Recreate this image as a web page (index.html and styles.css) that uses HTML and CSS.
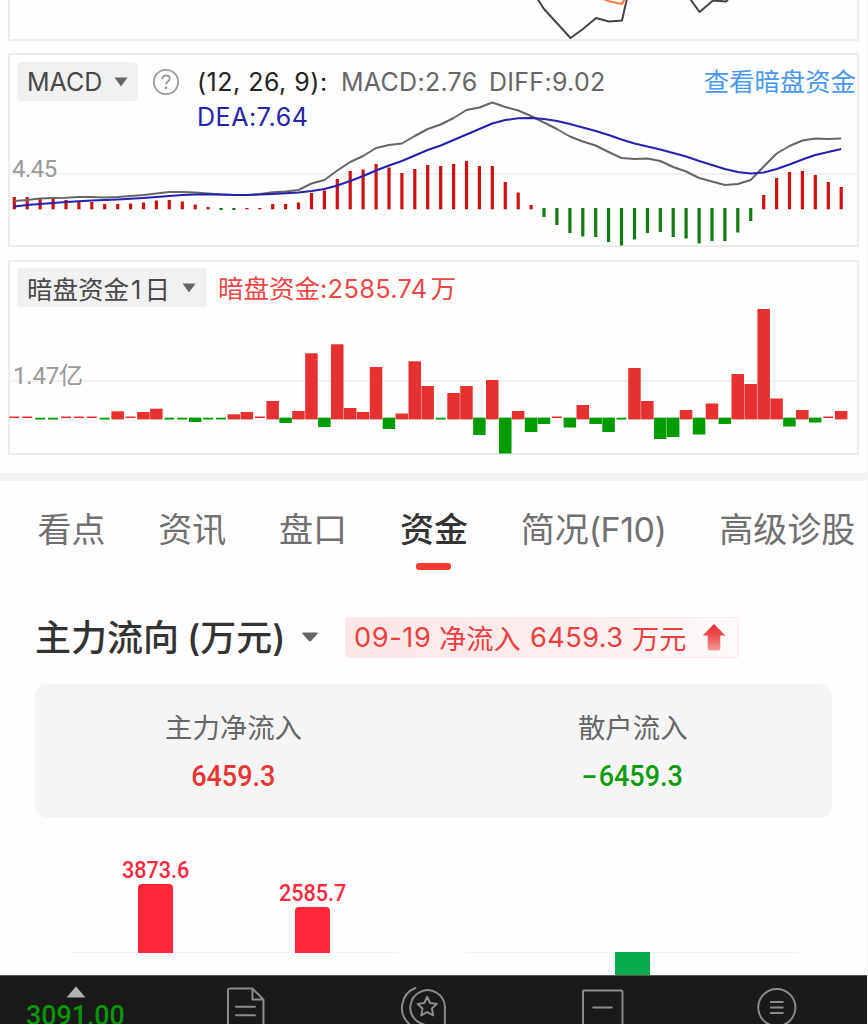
FILE: index.html
```html
<!DOCTYPE html>
<html lang="zh-CN">
<head>
<meta charset="utf-8">
<title>资金</title>
<link rel="stylesheet" href="styles.css">
</head>
<body>
<div class="page">
  <section class="panel panel-price">
    <svg class="plot" viewBox="8 0 851 41">
      <polyline class="line-orange" points="598,-3 610,1.5 622,4 625,-2"/>
      <polyline class="line-dark" points="535,-5 544,9 570.5,38 583,29 596,18 609,21.5 622,20.5 628,-6"/>
      <polyline class="line-dark" points="688,-4 699.5,12 713,0.5 726,1.5 728,0"/>
    </svg>
  </section>

  <section class="panel panel-macd">
    <svg class="plot" viewBox="8 53 851 194">
      <line class="grid-line" x1="9" x2="858" y1="174" y2="174"/>
      <g id="macd-bars"></g>
      <polyline id="diff-line" class="line-diff"/>
      <polyline id="dea-line" class="line-dea"/>
    </svg>
    <header class="head">
      <div class="chip chip-macd"><span class="t-macd">MACD</span><svg class="caret" viewBox="0 0 14 10"><path d="M.5 .5H13.5L7 9.5Z"/></svg></div>
      <svg class="help" viewBox="0 0 28 28"><circle cx="14" cy="14" r="12.2"/><path d="M10.3 11.2C10.4 8.7 11.8 7.5 14 7.5C16.2 7.5 17.7 8.8 17.7 10.7C17.7 13.3 14.1 13.4 14.1 16.5"/><circle class="dot" cx="14.1" cy="19.9" r="1.3"/></svg>
      <div class="readout">
        <div class="row"><span class="t-param">(12, 26, 9):</span><span class="t-val">MACD:2.76</span><span class="t-diff">DIFF:9.02</span></div>
        <div class="row"><span class="t-dea">DEA:7.64</span></div>
      </div>
      <a class="link">查看暗盘资金</a>
    </header>
    <span class="axis axis-macd">4.45</span>
  </section>

  <section class="panel panel-fund">
    <svg class="plot" viewBox="8 260 851 195">
      <line class="grid-line" x1="9" x2="858" y1="381" y2="381"/>
      <g id="fund-bars"></g>
    </svg>
    <header class="head">
      <div class="chip chip-fund"><span class="t-fund">暗盘资金<span class="one">1</span>日</span><svg class="caret" viewBox="0 0 14 10"><path d="M.5 .5H13.5L7 9.5Z"/></svg></div>
      <span class="t-red">暗盘资金<span class="num">:2585.74</span>万</span>
    </header>
    <span class="axis axis-fund">1.47<span class="yi">亿</span></span>
  </section>

  <div class="divider"></div>

  <nav class="tabs">
    <span class="tab">看点</span><span class="tab">资讯</span><span class="tab">盘口</span><span class="tab active">资金</span><span class="tab tab-f10">简况<span class="f10">(F10)</span></span><span class="tab">高级诊股</span>
  </nav>

  <div class="title-row">
    <h2 class="title">主力流向<span class="unit">(万元)</span></h2>
    <svg class="caret caret-lg" viewBox="0 0 18 12"><path d="M1.5 1.5H16.5Q17 2.3 16.3 3L10.3 9.8Q9 11 7.7 9.8L1.7 3Q1 2.3 1.5 1.5Z"/></svg>
    <div class="badge"><span class="b-date">09-19</span><span class="b-cn">净流入</span><span class="b-num">6459.3</span><span class="b-unit">万元</span>
      <svg class="arrow" viewBox="0 0 24 28"><defs><linearGradient id="ag" x1="0" y1="0" x2="0" y2="1"><stop offset="0" stop-color="#e52b2b"/><stop offset=".5" stop-color="#ee5558"/><stop offset="1" stop-color="#f59a9c"/></linearGradient></defs><path fill="url(#ag)" d="M12 1L23.3 12.5H18.3V25.5Q18.3 27.5 16.3 27.5H7.7Q5.7 27.5 5.7 25.5V12.5H.7Z"/></svg>
    </div>
  </div>

  <div class="summary">
    <div class="cell"><span class="label">主力净流入</span><span class="value up">6459.3</span></div>
    <div class="cell"><span class="label">散户流入</span><span class="value down"><span class="minus">-</span>6459.3</span></div>
  </div>

  <div class="flow">
    <div class="flow-half">
      <div class="col"><span class="col-label">3873.6</span><i class="bar bar-tall"></i></div>
      <div class="col"><span class="col-label">2585.7</span><i class="bar bar-short"></i></div>
    </div>
    <div class="flow-half flow-out"><i class="bar-green"></i></div>
  </div>

  <footer class="dock">
    <div class="quote"><svg class="tri" viewBox="0 0 20 12"><path d="M10 .5L19.5 11.5H.5Z"/></svg><span class="idx">3091.00</span></div>
    <svg class="dock-icons" viewBox="200 975 668 49">
      <g class="ico">
        <path d="M228 1030V990.5Q228 988.5 230 988.5H252.5L263.5 999.5V1030M252.5 988.5V999.5H263.5M236 1006.7H255M236 1015.2H255"/>
        <path d="M415.5 988A21.5 21.5 0 0 0 409.5 1024M445.2 1030V1007A17.3 17.3 0 1 0 416.5 1020.5Q420 1023.5 424 1024.2"/>
        <path d="M427.5 996.8L430.4 1003L437.2 1003.9L432.2 1008.6L433.5 1015.4L427.5 1012.1L421.5 1015.4L422.8 1008.6L417.8 1003.9L424.6 1003Z"/>
        <path d="M583.5 1030V992Q583.5 990.5 585 990.5H621.5Q623 990.5 623 992V1030M593.7 1007.5H612.3"/>
        <circle cx="777.5" cy="1007.5" r="18.6"/>
        <path d="M771.5 1002H783.5M771.5 1007.5H783.5M771.5 1013H783.5"/>
      </g>
    </svg>
  </footer>
</div>
<script src="charts.js"></script>
</body>
</html>
```
FILE: styles.css
```css
* { box-sizing: border-box; }
body { margin: 0; background: #fefefe; }
.page {
  width: 868px; height: 1024px; overflow: hidden;
  display: flex; flex-direction: column;
  font-family: Inter, "Noto Sans CJK SC", sans-serif;
  color: #333; white-space: nowrap;
  border-right: 1px solid #f6f6f6;
}
.page > * { flex: none; }

.panel { margin: 0 8px; width: 851px; display: grid; grid-template: 100% / 100%; box-shadow: inset 0 0 0 2px #ededed; }
.panel > * { grid-area: 1 / 1; }
.panel-price { height: 41px; box-shadow: inset 2px 0 #ededed, inset -2px 0 #ededed, inset 0 -2px #ededed; }
.panel-macd { height: 194px; margin-top: 12px; }
.panel-fund { height: 195px; margin-top: 13px; }
.plot { width: 851px; height: 100%; display: block; }
.plot polyline { fill: none; stroke-width: 2; stroke-linejoin: round; }
.line-dark { stroke: #444; }
.line-orange { stroke: #ff7a45; }
.line-diff { stroke: #666; }
.line-dea { stroke: #2222b0; }
.grid-line { stroke: #eee; stroke-width: 1.3; }
.macd-up { fill: #cf1010; }
.macd-down { fill: #147a14; }
.fund-up { fill: #e73030; }
.fund-down { fill: #009b00; }

.head { display: flex; align-items: flex-start; padding: 8px 3px 0 9px; }
.chip { height: 39px; border-radius: 4px; background: #f1f1f1; display: flex; align-items: center; justify-content: space-between; padding: 0 10px; color: #484848; }
.chip-macd { width: 121px; margin-top: 1px; }
.chip-fund { width: 190px; padding-right: 11px; }
.caret { width: 14px; height: 10px; fill: #666; }
.t-macd { font-size: 25px; letter-spacing: 0; }
.help { width: 28px; height: 28px; margin: 7px 0 0 14px; fill: none; stroke: #999; stroke-width: 1.8; }
.help .dot { fill: #999; stroke: none; }
.readout { margin-left: 17px; width: 507px; font-size: 25px; line-height: 35px; padding-top: 4px; letter-spacing: .3px; }
.row { display: flex; }
.t-param { width: 144px; color: #222; letter-spacing: .5px; }
.t-val { width: 148px; color: #666; }
.t-diff { color: #666; }
.t-dea { color: #2323a8; letter-spacing: .6px; }
.link { color: #4a97ee; font-size: 25.4px; line-height: 37px; padding-top: 2px; }
.axis { color: #999; align-self: start; justify-self: start; }
.axis-macd { font: 24px/30px Roboto, sans-serif; margin: 101px 0 0 4px; letter-spacing: -.5px; }
.axis-fund { font: 24px/30px Roboto, "Noto Sans CJK SC", sans-serif; margin: 101px 0 0 5px; letter-spacing: -.2px; }
.t-fund { font-size: 25.5px; }
.one { padding: 0 3px 0 2px; }
.t-red { color: #ef4747; font-size: 25.5px; line-height: 38px; margin-left: 11px; padding-top: 2px; }
.num { letter-spacing: .25px; margin-right: 3px; }

.divider { height: 8px; margin-top: 18px; background: #f4f4f4; }

.tabs { height: 98px; padding-left: 37.5px; display: flex; font-size: 34px; line-height: 98px; color: #707070; }
.tab { margin-right: 52.8px; }
.tab:last-child { margin-right: 0; }
.active { font-weight: 500; color: #333; display: flex; flex-direction: column; align-items: center; }
.active::after { content: ""; width: 35px; height: 7px; margin-top: -16px; border-radius: 3px; background: #fb3a30; }
.f10 { letter-spacing: -.5px; }

.title-row { display: flex; align-items: center; height: 42px; margin: 37px 0 0 35px; }
.title { margin: 0; font-size: 36px; font-weight: 500; line-height: 42px; width: 266px; padding-top: 2px; }
.unit { margin-left: 8px; }
.caret-lg { width: 18px; height: 12px; }
.badge { width: 394px; height: 41px; margin-left: 26px; padding-left: 8px; display: flex; align-items: center; border: 1px solid #fdeaea; border-radius: 4px; background: linear-gradient(90deg, #fce7e7, #fdeeee 60%, #fefafa); color: #ee3f3f; font-size: 27.2px; }
.b-date { width: 85px; letter-spacing: .6px; }
.b-cn { width: 91px; }
.b-num { width: 102px; letter-spacing: .4px; }
.b-unit { width: 70px; }
.arrow { width: 24px; height: 28px; }

.summary { width: 797px; height: 134px; margin: 26px 0 0 35px; border-radius: 12px; background: #f5f5f5; display: grid; grid-template-columns: 1fr 1fr; }
.cell { display: flex; flex-direction: column; align-items: center; padding-top: 24px; }
.cell:first-child { padding-right: 1.5px; }
.label { font-size: 27.4px; line-height: 40px; color: #666; }
.value { font: 500 30.3px/40px Roboto, sans-serif; margin-top: 8px; transform: scaleX(.89); }
.minus { display: inline-block; transform: scaleX(1.7); margin-right: 5px; }
.up { color: #e93434; }
.down { color: #0c9c0c; margin-left: 2px; }

.flow { height: 157px; display: flex; gap: 68px; padding-left: 69px; }
.flow-half { width: 330px; height: 134.5px; border-bottom: 1.5px solid #f3f3f3; display: flex; align-items: flex-end; justify-content: center; gap: 87px; }
.col { width: 70px; display: flex; flex-direction: column; align-items: center; margin-bottom: -1px; }
.col-label { font: 500 23.5px/28px Roboto, sans-serif; color: #fb2a40; transform: scaleX(.92); }
.bar { width: 35px; background: #ff2638; border-radius: 4px 4px 0 0; }
.bar-tall { height: 69px; }
.bar-short { height: 46px; }
.flow-out { align-items: flex-start; }
.bar-green { flex: none; width: 35px; height: 23px; margin-top: 134px; background: #09ab4d; }

.dock { height: 49px; background: #1a1a1a; border-top: 1px solid #555; display: flex; overflow: hidden; }
.quote { width: 200px; padding: 10px 0 0 26px; display: flex; flex-direction: column; }
.tri { flex: none; width: 20px; height: 12px; margin-left: 40px; fill: #b2b2b2; }
.idx { font: 500 28.5px/34px Roboto, sans-serif; color: #079607; margin-top: 1px; transform: scaleX(.94); transform-origin: 0 0; }
.dock-icons { width: 668px; height: 49px; margin-top: -1px; }
.ico { fill: none; stroke: #8c8c8c; stroke-width: 2; stroke-linejoin: round; stroke-linecap: round; }
```
FILE: charts.js
```js
const STEP = 12.92;

function rect(cls, x, y, w, h) {
  return `<rect class="${cls}" x="${x.toFixed(1)}" y="${y}" width="${w}" height="${h.toFixed(1)}"/>`;
}

// Bar ends on the vertical axis; values above the zero line are gains.
const macd = [197,197,198,199,200,201,202,204,204,203.5,202.5,200.5,200,201.5,204.5,207,210,210,208,208,204,204,202.5,193,190.5,179,171,169.5,164,167.5,173,169,165,166,164,161,166,166,182,192.5,205,217,225,233,236.5,237,242,245.5,239.5,233,232,237,238.5,243.5,241,241,232.5,221,195,178,172,171,175,182,187];
document.getElementById('macd-bars').innerHTML = macd.map((v, i) => {
  const x = 14.3 + STEP * i - 1.6;
  return v < 209 ? rect('macd-up', x, v, 3.2, 209.3 - v) : rect('macd-down', x, 208, 3.2, v - 208);
}).join('');

const diff = [201,200,198.5,198,197.7,197,197,197.5,197,196,195,193.5,192,192,192.5,193.5,194.5,195,195,194,192.3,191.5,190,183.5,180,170.5,162,156,148,145,143.5,136,129,124.5,118,110,107.5,102.5,107,110.5,116,122.5,129,136.5,141.5,145.5,152,158,159,158.5,161,167,171.5,178,181.5,185,184,180,166.5,153.5,146,140.5,138.5,139,138.5];
const dea = [206.5,205,204,203,202,201.2,200.5,200,199.5,198.8,198,197,196,195,194.5,194.3,194.5,195,195,194.6,194,193.3,192.5,191,189,185.5,181,176,170.5,165.5,161,155.5,150,145.5,140,134.5,129,123.5,120,118.3,118,119,121,124,127.5,131,135,139.5,143.5,146.5,149.5,153,156.5,161,165,169,172,173.5,172.5,169,164.5,159.5,155,152,149];
const points = a => a.map((v, i) => `${(14.3 + STEP * i).toFixed(1)},${v}`).join(' ');
document.getElementById('diff-line').setAttribute('points', points(diff));
document.getElementById('dea-line').setAttribute('points', points(dea));

// 'r' and 'g' mark near-zero days drawn as short dashes.
const fund = ['r','r','g','g','r','r','r','g',411.3,'r',412,408.7,'g','g',422,'g','g',414.3,412,'r',401,423,411,353.3,427,344.3,408,412,367,429,413.5,361.3,386,'g',393,386,435,380,453.5,411,432,424,'r',427.5,405,424,432,'g',368,401,439,437,410,434.5,403.5,424,374,384,309,398.5,426.5,410,422.5,'r',411];
document.getElementById('fund-bars').innerHTML = fund.map((v, i) => {
  const x = 8 + STEP * i;
  if (v === 'r') return rect('fund-up', x + 1.3, 416.5, 10, 1.6);
  if (v === 'g') return rect('fund-down', x + 1.3, 417.7, 10, 1.8);
  return v < 417 ? rect('fund-up', x, v, 12.5, 419.4 - v) : rect('fund-down', x, 417.6, 12.5, v - 417.6);
}).join('');
```
